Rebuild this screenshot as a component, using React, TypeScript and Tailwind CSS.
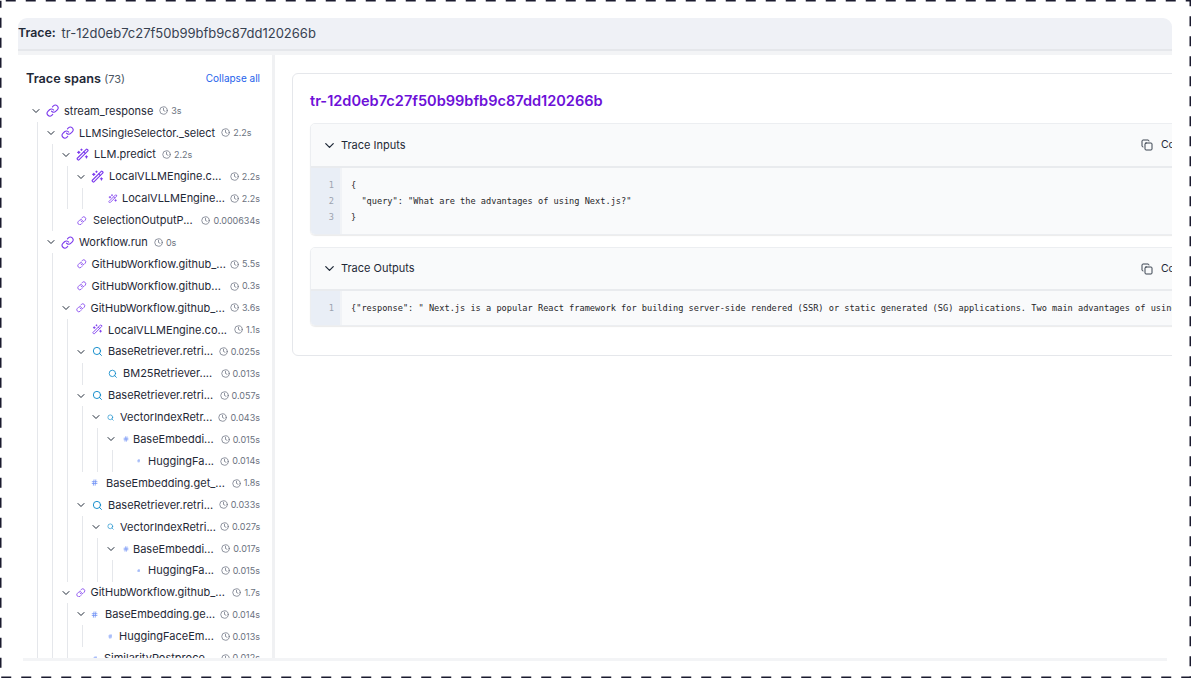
import { ChevronDown, Clock, Copy, Link, Search, WandSparkles, Hash } from "lucide-react";

type N = { n: string; t: string; k: "link" | "wand" | "search" | "emb"; w: number; ix: number; tx: number; open?: boolean; kids?: N[] };

const tree: N = {
  n: "stream_response", t: "3s", k: "link", w: 11, ix: 0, tx: 17, open: true, kids: [
    { n: "LLMSingleSelector._select", t: "2.2s", k: "link", w: 11, ix: 0, tx: 17, open: true, kids: [
      { n: "LLM.predict", t: "2.2s", k: "wand", w: 11, ix: 0, tx: 17, open: true, kids: [
        { n: "LocalVLLMEngine.c...", t: "2.2s", k: "wand", w: 11, ix: 0, tx: 17, open: true, kids: [
          { n: "LocalVLLMEngine...", t: "2.2s", k: "wand", w: 8, ix: 2, tx: 15 },
        ] },
      ] },
      { n: "SelectionOutputP...", t: "0.000634s", k: "link", w: 8, ix: 1, tx: 16 },
    ] },
    { n: "Workflow.run", t: "0s", k: "link", w: 11, ix: 0, tx: 17, open: true, kids: [
      { n: "GitHubWorkflow.github_...", t: "5.5s", k: "link", w: 8, ix: 1, tx: 14.5 },
      { n: "GitHubWorkflow.github...", t: "0.3s", k: "link", w: 8, ix: 1, tx: 14.5 },
      { n: "GitHubWorkflow.github_...", t: "3.6s", k: "link", w: 8, ix: 0, tx: 13.5, open: true, kids: [
        { n: "LocalVLLMEngine.co...", t: "1.1s", k: "wand", w: 9, ix: 1, tx: 16 },
        { n: "BaseRetriever.retri...", t: "0.025s", k: "search", w: 9, ix: 1, tx: 16, open: true, kids: [
          { n: "BM25Retriever....", t: "0.013s", k: "search", w: 8, ix: 2, tx: 16 },
        ] },
        { n: "BaseRetriever.retri...", t: "0.057s", k: "search", w: 9, ix: 1, tx: 16, open: true, kids: [
          { n: "VectorIndexRetr...", t: "0.043s", k: "search", w: 6, ix: 1, tx: 13, open: true, kids: [
            { n: "BaseEmbeddi...", t: "0.015s", k: "emb", w: 5, ix: 1, tx: 11, open: true, kids: [
              { n: "HuggingFa...", t: "0.014s", k: "emb", w: 3, ix: 0, tx: 11 },
            ] },
          ] },
        ] },
        { n: "BaseEmbedding.get_...", t: "1.8s", k: "emb", w: 6, ix: 0, tx: 14 },
        { n: "BaseRetriever.retri...", t: "0.033s", k: "search", w: 9, ix: 1, tx: 16, open: true, kids: [
          { n: "VectorIndexRetri...", t: "0.027s", k: "search", w: 6, ix: 1, tx: 13, open: true, kids: [
            { n: "BaseEmbeddi...", t: "0.017s", k: "emb", w: 5, ix: 1, tx: 11, open: true, kids: [
              { n: "HuggingFa...", t: "0.015s", k: "emb", w: 3, ix: 0, tx: 11 },
            ] },
          ] },
        ] },
      ] },
      { n: "GitHubWorkflow.github_...", t: "1.7s", k: "link", w: 8, ix: 0, tx: 13.5, open: true, kids: [
        { n: "BaseEmbedding.ge...", t: "0.014s", k: "emb", w: 6, ix: 0, tx: 13, open: true, kids: [
          { n: "HuggingFaceEm...", t: "0.013s", k: "emb", w: 4, ix: 1, tx: 12 },
        ] },
        { n: "SimilarityPostproce...", t: "0.012s", k: "emb", w: 4, ix: 1, tx: 12 },
      ] },
    ] },
  ],
};

function SpanIcon({ k, w }: { k: N["k"]; w: number }) {
  const size = w * 1.2;
  const style = { marginLeft: -w * 0.1 };
  if (k === "link") return <Link size={size} strokeWidth={2} style={style} className="shrink-0 text-[#7c3aed]" />;
  if (k === "wand") return <WandSparkles size={size} strokeWidth={2} style={style} className="shrink-0 text-[#7c3aed]" />;
  if (k === "search") return <Search size={size} strokeWidth={2} style={style} className="shrink-0 text-[#0284c7]" />;
  return <Hash size={size} strokeWidth={2.5} style={style} className="shrink-0 text-[#6d8ff5]" />;
}

function Row({ node }: { node: N }) {
  return (
    <div>
      <div className="flex h-[21.9px] items-center">
        <span className="flex w-[17px] shrink-0 items-center">
          {node.open && <ChevronDown size={12} strokeWidth={2} className="text-[#1f2937]" />}
        </span>
        <span className="flex shrink-0 items-center" style={{ width: node.tx, paddingLeft: node.ix }}>
          <SpanIcon k={node.k} w={node.w} />
        </span>
        <span className="whitespace-nowrap text-[11px] text-[#1f2937]">{node.n}</span>
        <span className={`flex shrink-0 items-center gap-[3px] pl-[4px] text-[9px] text-[#6b7280] ${node.n.endsWith("...") ? "ml-auto" : "ml-[2px]"}`}>
          <Clock size={9} strokeWidth={2} />
          {node.t}
        </span>
      </div>
      {node.kids && (
        <div className="ml-[7px] border-l border-[#e5e7eb] pl-[7px]">
          {node.kids.map((c, i) => (
            <Row key={i} node={c} />
          ))}
        </div>
      )}
    </div>
  );
}

function CodeBlock({ title, lines, head }: { title: string; lines: string[]; head: string }) {
  return (
    <div className="overflow-hidden rounded-[5px] border border-[#eceef1] shadow-[0_1px_1px_rgba(0,0,0,0.08)]">
      <div className={`flex items-center border-b-2 border-[#e9ebee] bg-[#f9fafb] pl-[11px] pr-[13px] ${head}`}>
        <ChevronDown size={15} strokeWidth={2} className="text-[#1f2937]" />
        <span className="ml-[4px] text-[11px] text-[#1f2937]">{title}</span>
        <Copy size={12} strokeWidth={1.75} className="ml-auto text-[#1f2937]" />
        <span className="ml-[8px] text-[10.5px] text-[#1f2937]">Copy</span>
      </div>
      <div className="flex bg-[#f9fafb] font-['DejaVu_Sans_Mono',monospace] text-[8.64px] leading-[16px]">
        <div className="w-[31px] shrink-0 self-stretch border-r-2 border-[#f1f3f6] bg-[#e9eef6]">
          <div className="pr-[6px] pt-[9px] text-right text-[#9ca3af]">
            {lines.map((_, i) => (
              <div key={i}>{i + 1}</div>
            ))}
          </div>
        </div>
        <div className="whitespace-pre pb-[9px] pl-[9px] pt-[9px] text-[#27272a]">
          {lines.map((l, i) => (
            <div key={i}>{l}</div>
          ))}
        </div>
      </div>
    </div>
  );
}

export default function App() {
  return (
    <div className="relative h-[678px] w-[1191px] overflow-hidden bg-white pb-[17px] pl-[18px] pr-[19px] pt-[18px] font-['Inter',sans-serif]">
      <svg className="pointer-events-none absolute inset-0" width="1191" height="678">
        <rect x="0.75" y="0.75" width="1189.5" height="676.5" fill="none" stroke="#1a1a2e" strokeWidth="1.5" strokeDasharray="10 10" strokeDashoffset="15" />
      </svg>
      <div className="flex h-full flex-col overflow-hidden">
        <div className="flex h-[33px] shrink-0 items-center rounded-t-[9px] border-b-2 border-[#e5e7eb] bg-[#eff1f6]">
          <span className="text-[12.3px] font-semibold text-[#1f2937]">Trace:</span>
          <span className="ml-[6px] text-[13px] text-[#374151]">tr-12d0eb7c27f50b99bfb9c87dd120266b</span>
        </div>
        <div className="h-[4px] shrink-0 bg-[#f3f4f6]" />
        <div className="flex min-h-0 flex-1">
          <aside className="w-[257px] shrink-0 overflow-hidden border-r-[3px] border-[#f0f1f3] pl-[8px] pr-[12px]">
            <div className="flex h-[38px] items-center justify-between pt-[9px]">
              <div className="text-[12.7px] font-semibold text-[#1f2937]">
                Trace spans <span className="text-[11px] font-normal text-[#4b5563]">(73)</span>
              </div>
              <span className="text-[10px] text-[#2563eb]">Collapse all</span>
            </div>
            <div className="pl-[4px] pt-[7px]">
              <Row node={tree} />
            </div>
          </aside>
          <main className="min-w-0 flex-1 overflow-hidden pl-[17px] pt-[18px]">
            <div className="h-[283px] w-[927px] rounded-[6px] border border-[#e5e7eb] bg-white px-[17px] pt-[17px]">
              <div className="text-[14.55px] font-semibold leading-[20px] text-[#6d10d8]">tr-12d0eb7c27f50b99bfb9c87dd120266b</div>
              <div className="mt-[12px] flex flex-col gap-[12px]">
                <CodeBlock head="h-[44px]" title="Trace Inputs" lines={["{", '  "query": "What are the advantages of using Next.js?"', "}"]} />
                <CodeBlock head="h-[43px]" title="Trace Outputs" lines={['{"response": " Next.js is a popular React framework for building server-side rendered (SSR) or static generated (SG) applications. Two main advantages of using Next.js are']} />
              </div>
            </div>
          </main>
        </div>
        <div className="mx-[5px] h-[3px] shrink-0 bg-[#f3f4f6]" />
      </div>
    </div>
  );
}
